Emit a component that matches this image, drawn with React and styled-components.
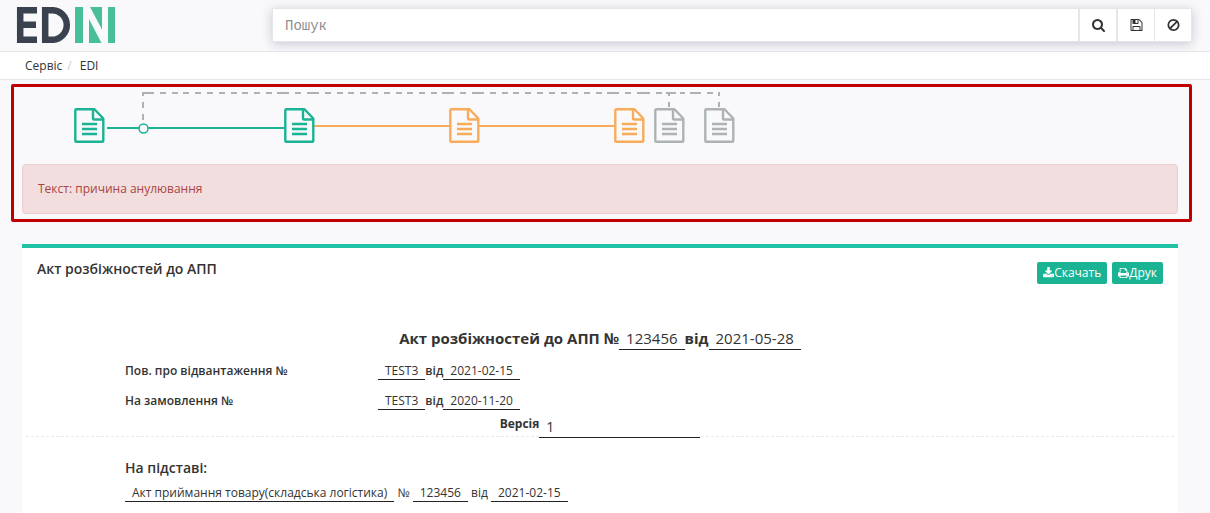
import React from "react";
import styled, { createGlobalStyle } from "styled-components";

const GlobalStyle = createGlobalStyle`
  * { box-sizing: border-box; }
  body {
    margin: 0;
    background: #f9f9fb;
    color: #333;
    font-family: "Open Sans", "Noto Sans", sans-serif;
    font-size: 12px;
    line-height: 18px;
  }
`;

const Header = styled.header`
  display: flex;
  justify-content: space-between;
  align-items: flex-start;
  height: 52px;
  padding: 7px 18px 0 16px;
  border-bottom: 1px solid #e7e7ea;
`;

const LogoLink = styled.a`
  display: block;
  height: 36px;
  svg { display: block; }
`;

const SearchBar = styled.form`
  display: flex;
  width: 79%;
  max-width: 920px;
  height: 34px;
  margin-top: 1px;
  background: #fff;
  border: 1px solid #e5e6e7;
  box-shadow: 0 2px 10px rgba(50, 50, 90, 0.25);
`;

const SearchInput = styled.input`
  flex: 1;
  min-width: 0;
  padding: 2px 12px 0;
  border: 0;
  outline: 0;
  background: transparent;
  color: #333;
  font-family: "Liberation Mono", monospace;
  font-size: 14px;
  &::placeholder { color: #8e8e8e; opacity: 1; }
`;

const IconButton = styled.button`
  display: flex;
  align-items: center;
  justify-content: center;
  width: ${(p) => (p.$wide ? 38 : 37)}px;
  padding: 0;
  border: 0;
  border-left: ${(p) => (p.$wide ? 2 : 1)}px solid #e5e6e7;
  background: #fff;
  color: #333;
  cursor: pointer;
`;

const Glyph = styled.svg`
  display: block;
  width: ${(p) => p.$size - 1}px;
  height: ${(p) => p.$size}px;
  fill: currentColor;
`;

const Breadcrumb = styled.nav`
  display: flex;
  padding: 5px 25px 4px;
  background: #fff;
  border-bottom: 1px solid #e7e7ea;
  a { color: #333; text-decoration: none; }
  a + a::before { content: "/"; padding: 0 8px 0 5px; color: #ccc; }
`;

const StatusPanel = styled.section`
  margin: 4px 18px 0 11px;
  padding: 3px 11px 5px 8px;
  border: 3px solid #c00000;
  border-radius: 2px;
`;

const Flow = styled.svg`
  display: block;
  margin-bottom: 14px;
`;

const Alert = styled.div`
  padding: 15px;
  border: 1px solid #ebccd1;
  border-radius: 4px;
  background: #f2dede;
  color: #a94442;
`;

const Card = styled.main`
  margin: 22px 32px 0 22px;
  border-top: 4px solid #1ec3a5;
  background: #fff;
`;

const CardHeader = styled.div`
  display: flex;
  justify-content: space-between;
  align-items: flex-start;
  padding: 12px 15px;
`;

const CardTitle = styled.h1`
  margin: 0;
  font-size: 14px;
  line-height: 18px;
  font-weight: 600;
`;

const Actions = styled.div`
  display: flex;
  gap: 5px;
  padding-top: 2px;
`;

const ActionButton = styled.button`
  display: flex;
  align-items: center;
  height: 22px;
  padding: 0 6px;
  border: 0;
  border-radius: 2px;
  background: #1ab394;
  color: #fff;
  font: inherit;
  cursor: pointer;
`;

const DocTitle = styled.h2`
  margin: 31px 0 0;
  text-align: center;
  font-size: 15px;
  line-height: 22px;
  font-weight: 700;
`;

const Value = styled.span`
  display: inline-block;
  padding: 0 7px;
  border-bottom: 1px solid #222;
  font-weight: 400;
`;

const CompactValue = styled(Value)`
  line-height: 16px;
`;

const DocRow = styled.div`
  display: grid;
  grid-template-columns: 253px 1fr;
  margin: 0 103px;
  padding-top: 12px;
  font-weight: 600;
  line-height: 18px;
`;

const Version = styled.div`
  display: flex;
  justify-content: center;
  align-items: flex-start;
  height: 27px;
  margin-top: 5px;
  font-weight: 700;
`;

const VersionValue = styled.span`
  width: 161px;
  height: 23px;
  padding: 3px 7px 0;
  border-bottom: 1px solid #222;
  background: #fff;
  position: relative;
  font-weight: 400;
  font-size: 14px;
`;

const Divider = styled.hr`
  margin: -6px 4px 0;
  border: 0;
  border-top: 1px dashed #e7eaec;
`;

const Basis = styled.section`
  padding: 21px 103px 11px;
`;

const BasisTitle = styled.h3`
  margin: 0 0 6px;
  font-size: 14px;
  line-height: 20px;
  font-weight: 600;
`;

const paths = {
  search: "M1216 832q0-185-131.5-316.5t-316.5-131.5-316.5 131.5-131.5 316.5 131.5 316.5 316.5 131.5 316.5-131.5 131.5-316.5zm512 832q0 52-38 90t-90 38q-54 0-90-38l-343-342q-179 124-399 124-143 0-273.5-55.5t-225-150-150-225-55.5-273.5 55.5-273.5 150-225 225-150 273.5-55.5 273.5 55.5 225 150 150 225 55.5 273.5q0 220-124 399l343 343q37 37 37 90z",
  save: "M512 1536h768v-384h-768v384zm896 0h128v-896q0-14-10-38.5t-20-34.5l-281-281q-10-10-34-20t-39-10v416q0 40-28 68t-68 28h-576q-40 0-68-28t-28-68v-416h-128v1280h128v-416q0-40 28-68t68-28h832q40 0 68 28t28 68v416zm-384-928v-320q0-13-9.5-22.5t-22.5-9.5h-192q-13 0-22.5 9.5t-9.5 22.5v320q0 13 9.5 22.5t22.5 9.5h192q13 0 22.5-9.5t9.5-22.5zm640 32v928q0 40-28 68t-68 28h-1344q-40 0-68-28t-28-68v-1344q0-40 28-68t68-28h928q40 0 88 20t76 48l280 280q28 28 48 76t20 88z",
  ban: "M1440 893q0-161-87-295l-754 753q137 89 297 89 111 0 211.5-43.5t173.5-116.5 116-174.5 43-212.5zm-999 299l755-754q-135-91-300-91-148 0-273 73t-198 199-73 274q0 162 89 299zm1223-299q0 157-61 300t-163.5 246-245 164-298.5 61-298.5-61-245-164-163.5-246-61-300 61-299.5 163.5-245.5 245-164 298.5-61 298.5 61 245 164 163.5 245.5 61 299.5z",
  download: "M1344 1344q0-26-19-45t-45-19-45 19-19 45 19 45 45 19 45-19 19-45zm256 0q0-26-19-45t-45-19-45 19-19 45 19 45 45 19 45-19 19-45zm128-224v320q0 40-28 68t-68 28h-1472q-40 0-68-28t-28-68v-320q0-40 28-68t68-28h465l135 136q58 56 136 56t136-56l136-136h464q40 0 68 28t28 68zm-325-569q17 41-14 70l-448 448q-18 19-45 19t-45-19l-448-448q-31-29-14-70 17-39 59-39h256v-448q0-26 19-45t45-19h256q26 0 45 19t19 45v448h256q42 0 59 39z",
  print: "M448 1536h896v-256h-896v256zm0-640h896v-384h-160q-40 0-68-28t-28-68v-160h-640v640zm1152 64q0-26-19-45t-45-19-45 19-19 45 19 45 45 19 45-19 19-45zm128 0v416q0 13-9.5 22.5t-22.5 9.5h-224v160q0 40-28 68t-68 28h-960q-40 0-68-28t-28-68v-160h-224q-13 0-22.5-9.5t-9.5-22.5v-416q0-79 56.5-135.5t135.5-56.5h64v-544q0-40 28-68t68-28h672q40 0 88 20t76 48l152 152q28 28 48 76t20 88v256h64q79 0 135.5 56.5t56.5 135.5z",
};

const Icon = ({ name, size = 14 }) => (
  <Glyph $size={size} viewBox="64 0 1664 1792" aria-hidden="true">
    <path d={paths[name]} />
  </Glyph>
);

const Logo = () => (
  <svg width="100" height="36" viewBox="0 0 100 36" role="img" aria-label="EDIN">
    <g fill="none" stroke="#39424e" strokeWidth="6.5">
      <path d="M21 3.2H4.2V32.8H21M4 17.7H20" />
      <path d="M29.2 3.2H36A14.8 14.8 0 0 1 36 32.8H29.2Z" />
    </g>
    <path
      fill="#48bf98"
      d="M59 0h8v36h-8zM92 0h7v36h-7zM74 0h12v22.500zM73 12l12.500 24H73z"
    />
  </svg>
);

const green = "#1ab394";
const orange = "#f8ac59";
const gray = "#adb3b5";

const Doc = ({ x, color }) => (
  <g transform={`translate(${x} 18)`} fill="#f9f9fb" stroke={color} strokeWidth="2.4" strokeLinejoin="round">
    <path d="M2.500 1.200H20.500L29.300 10.500V32.800Q29.300 33.800 28.300 33.800H2.300Q1.300 33.800 1.300 32.800V2.200Q1.300 1.200 2.500 1.200Z" />
    <path d="M19 1.500V10.500Q19 11.500 20 11.500H29" fill="none" />
    <path d="M8 16H23M8 21H23M8 26H23" />
  </g>
);

const longRun = "12 6 6 6 6 5 6 6 6 6 6 6 6 6 6 5 6 6 6 6 6 5 12 6 6 6";

const StatusFlow = () => (
  <Flow width="760" height="60" viewBox="22 0 760 60" role="img" aria-label="Document flow">
    <g fill="none" stroke={gray} strokeWidth="2">
      <path d="M142 3H638" strokeDasharray={longRun} />
      <path d="M638 3H720" strokeDasharray="12 6 6 4 10 4 5 5 11 6 6 5 3 9" />
      <path d="M143 3V33M669 3V17M719 3V17" strokeDasharray="6 6" strokeDashoffset="3" />
    </g>
    <path d="M107 38H284" stroke={green} strokeWidth="2" />
    <path d="M314 36H614" stroke={orange} strokeWidth="2" />
    <circle cx="143.500" cy="38.500" r="4.500" fill="#f9f9fb" stroke={green} strokeWidth="1.500" />
    <Doc x={74} color={green} />
    <Doc x={284} color={green} />
    <Doc x={449} color={orange} />
    <Doc x={614} color={orange} />
    <Doc x={654} color={gray} />
    <Doc x={704} color={gray} />
  </Flow>
);

export default function App() {
  return (
    <>
      <GlobalStyle />
      <Header>
        <LogoLink href="#"><Logo /></LogoLink>
        <SearchBar role="search">
          <SearchInput type="text" placeholder="Пошук" aria-label="Пошук" />
          <IconButton type="button" $wide aria-label="Пошук"><Icon name="search" /></IconButton>
          <IconButton type="button" $wide aria-label="Зберегти"><Icon name="save" /></IconButton>
          <IconButton type="button" aria-label="Скинути"><Icon name="ban" /></IconButton>
        </SearchBar>
      </Header>
      <Breadcrumb>
        <a href="#">Сервіс</a>
        <a href="#">EDI</a>
      </Breadcrumb>
      <StatusPanel>
        <StatusFlow />
        <Alert role="alert">Текст: причина анулювання</Alert>
      </StatusPanel>
      <Card>
        <CardHeader>
          <CardTitle>Акт розбіжностей до АПП</CardTitle>
          <Actions>
            <ActionButton type="button"><Icon name="download" size={12} />Скачать</ActionButton>
            <ActionButton type="button"><Icon name="print" size={12} />Друк</ActionButton>
          </Actions>
        </CardHeader>
        <DocTitle>
          Акт розбіжностей до АПП №<Value>123456</Value>від<Value>2021-05-28</Value>
        </DocTitle>
        <DocRow>
          <span>Пов. про відвантаження №</span>
          <span><CompactValue>TEST3</CompactValue>від<CompactValue>2021-02-15</CompactValue></span>
        </DocRow>
        <DocRow>
          <span>На замовлення №</span>
          <span><CompactValue>TEST3</CompactValue>від<CompactValue>2020-11-20</CompactValue></span>
        </DocRow>
        <Version>
          <span>Версія</span>
          <VersionValue>1</VersionValue>
        </Version>
        <Divider />
        <Basis>
          <BasisTitle>На підставі:</BasisTitle>
          <div>
            <CompactValue>Акт приймання товару(складська логістика)</CompactValue>{" "}
            №{" "}
            <CompactValue>123456</CompactValue>{" "}
            від{" "}
            <CompactValue>2021-02-15</CompactValue>
          </div>
        </Basis>
      </Card>
    </>
  );
}
